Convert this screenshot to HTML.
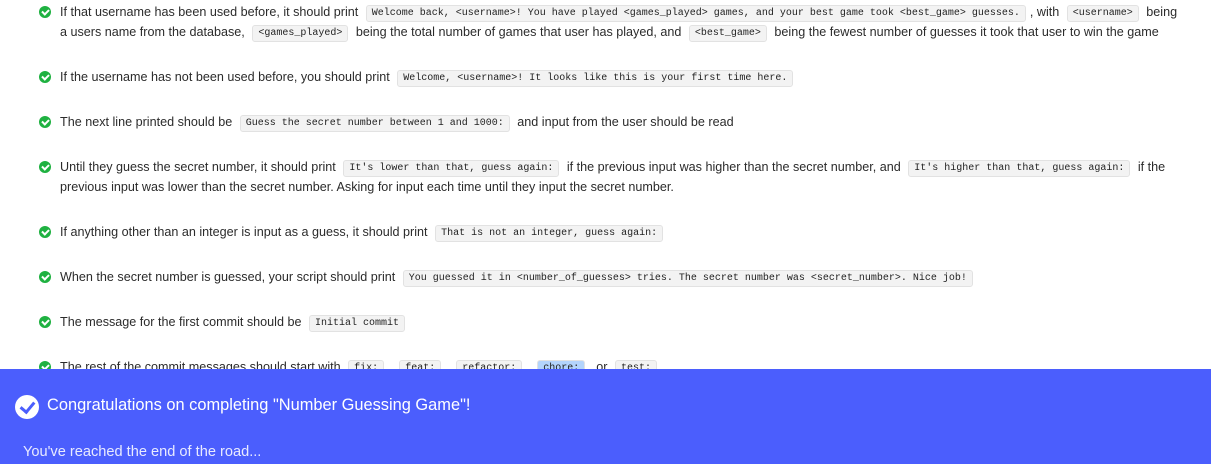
<!DOCTYPE html>
<html><head><style>
body{margin:0;width:1211px;height:464px;overflow:hidden;background:#fff;font-family:"Liberation Sans",sans-serif;color:#2b2b2b;font-size:12.6px;position:relative}
.item{position:absolute;left:60px;width:1140px;line-height:20px;white-space:nowrap}
.item .ic{position:absolute;left:-21px;top:4px;width:12px;height:12px;border-radius:50%;background:#1fb141}
.item .ic:after{content:"";position:absolute;left:3.5px;top:2px;width:3px;height:5px;border:solid #fff;border-width:0 2px 2px 0;transform:rotate(45deg)}
code{font-family:"Liberation Mono",monospace;font-size:10px;line-height:13px;display:inline-block;vertical-align:1px;background:#f3f3f3;border:1px solid #e2e2e2;border-radius:3px;padding:1px 5px;margin:0 4px;color:#222}
.ban{position:absolute;left:0;top:369px;width:1211px;height:95px;background:#4b5efd;color:#fff}
.ban .t{position:absolute;left:47px;top:27px;font-size:16.4px}
.ban .c{position:absolute;left:15px;top:26px;width:24px;height:24px;border-radius:50%;background:#fff}
.ban .c:after{content:"";position:absolute;left:8px;top:4px;width:6px;height:11px;border:solid #4b5efd;border-width:0 3px 3px 0;transform:rotate(40deg)}
.ban .s{position:absolute;left:23px;top:75px;font-size:14.6px;color:#e8eaff}
</style></head><body>
<div class="item" style="top:2px"><span class="ic"></span>If that username has been used before, it should print <code>Welcome back, &lt;username&gt;! You have played &lt;games_played&gt; games, and your best game took &lt;best_game&gt; guesses.</code>, with <code>&lt;username&gt;</code> being<br>a users name from the database, <code>&lt;games_played&gt;</code> being the total number of games that user has played, and <code>&lt;best_game&gt;</code> being the fewest number of guesses it took that user to win the game</div>
<div class="item" style="top:67px"><span class="ic"></span>If the username has not been used before, you should print <code>Welcome, &lt;username&gt;! It looks like this is your first time here.</code></div>
<div class="item" style="top:112px"><span class="ic"></span>The next line printed should be <code>Guess the secret number between 1 and 1000:</code> and input from the user should be read</div>
<div class="item" style="top:157px"><span class="ic"></span>Until they guess the secret number, it should print <code>It's lower than that, guess again:</code> if the previous input was higher than the secret number, and <code>It's higher than that, guess again:</code> if the<br>previous input was lower than the secret number. Asking for input each time until they input the secret number.</div>
<div class="item" style="top:222px"><span class="ic"></span>If anything other than an integer is input as a guess, it should print <code>That is not an integer, guess again:</code></div>
<div class="item" style="top:267px"><span class="ic"></span>When the secret number is guessed, your script should print <code>You guessed it in &lt;number_of_guesses&gt; tries. The secret number was &lt;secret_number&gt;. Nice job!</code></div>
<div class="item" style="top:312px"><span class="ic"></span>The message for the first commit should be <code>Initial commit</code></div>
<div class="item" style="top:357px"><span class="ic"></span>The rest of the commit messages should start with <code>fix:</code>, <code>feat:</code>, <code>refactor:</code>, <code style="background:#b3d4fc">chore:</code>, or <code>test:</code></div>
<div class="ban"><span class="c"></span><div class="t">Congratulations on completing "Number Guessing Game"!</div><div class="s">You've reached the end of the road...</div></div>
</body></html>
